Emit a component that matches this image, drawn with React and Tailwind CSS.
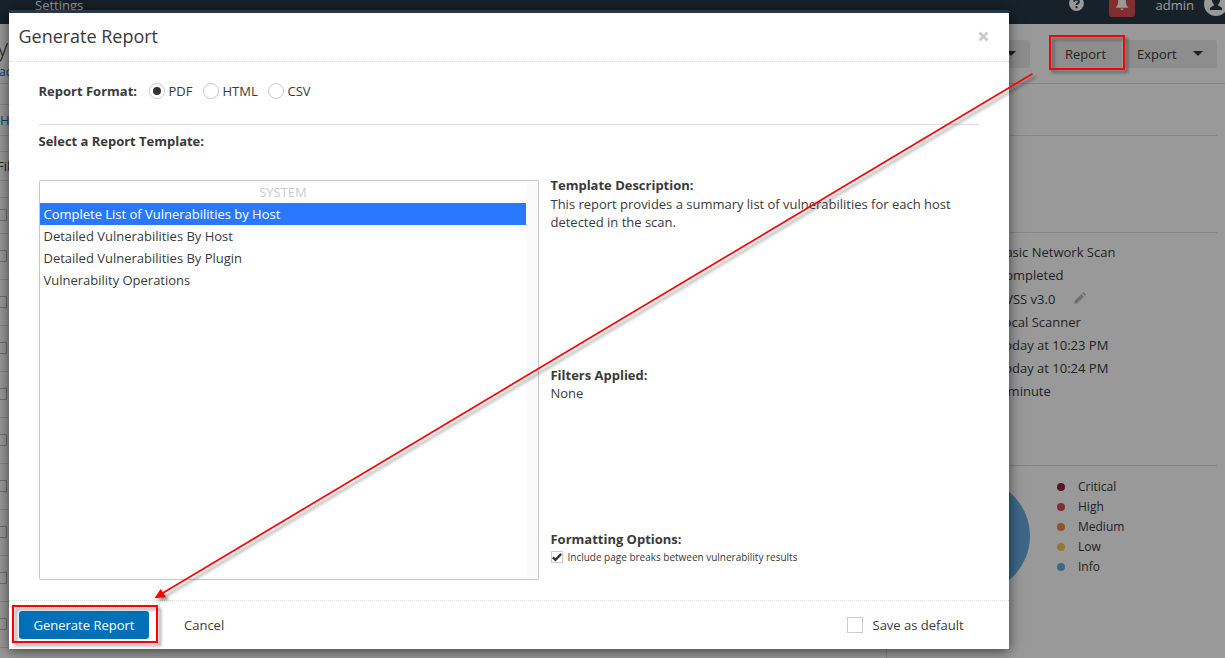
import React from "react";

const checkboxRows = Array.from({ length: 9 }, (_, i) => i);
const scanDetails = [
  ["Basic Network Scan", "h-[23px]"],
  ["Completed", "h-[23px]"],
  ["CVSS v3.0", "h-[25px]"],
  ["Local Scanner", "h-[22px]"],
  ["Today at 10:23 PM", "h-[23px]"],
  ["Today at 10:24 PM", "h-[23px]"],
  ["a minute", "h-[23px]"],
];
const severities = [
  ["Critical", "bg-[#91243e]"],
  ["High", "bg-[#dd4b50]"],
  ["Medium", "bg-[#f18c43]"],
  ["Low", "bg-[#f8c851]"],
  ["Info", "bg-[#67ace1]"],
];
const templates = [
  "Complete List of Vulnerabilities by Host",
  "Detailed Vulnerabilities By Host",
  "Detailed Vulnerabilities By Plugin",
  "Vulnerability Operations",
];

function Caret() {
  return (
    <svg width="10" height="5" viewBox="0 0 10 5" className="-mt-px shrink-0">
      <path d="M0 0h10L5 5z" fill="#333" />
    </svg>
  );
}

function TopBar() {
  return (
    <header className="flex h-6 shrink-0 items-start bg-[#263746] text-[13px] leading-[18px] text-white">
      <span className="-mt-1 ml-[35px]">Settings</span>
      <div className="ml-auto flex items-start">
        <svg width="16" height="16" viewBox="0 0 16 16" className="-mt-[5px] mr-[24.5px]">
          <circle cx="7.500" cy="8.500" r="7.400" fill="#fff" />
          <path d="M5.200 6.700a2.300 2.100 0 1 1 3.500 1.700c-.8.5-1.200.8-1.200 1.600" fill="none" stroke="#263746" strokeWidth="1.900" />
          <rect x="6.500" y="11.200" width="2" height="2" fill="#263746" />
        </svg>
        <div className="-mt-[9px] flex h-[26px] w-[26px] justify-center rounded-[3px] bg-[#dd4b50] pt-[5px]">
          <svg width="14" height="15" viewBox="0 0 14 15">
            <path d="M7 0C4 .5 3.200 3 3.200 5.500c0 3-1 4.500-2.700 6.200h13c-1.700-1.700-2.700-3.200-2.700-6.200C10.800 3 10 .5 7 0z" fill="#fff" />
            <path d="M5.500 12.500h3a1.500 1.500 0 0 1-3 0z" fill="#fff" />
          </svg>
        </div>
        <span className="-mt-1 ml-[20.5px] w-[48.5px]">admin</span>
        <svg width="21" height="24" viewBox="0 0 21 24" className="-mt-[8px]">
          <circle cx="12" cy="12" r="12" fill="#fff" />
          <path d="M12 3c-3.300 0-4.200 2.300-4.200 4.500 0 2.300 1 3.600 2 4.700v1.600c-2 .8-4 1.300-4 4.200h12.400c0-2.900-2-3.400-4-4.200v-1.600c1-1.100 2-2.400 2-4.700C16.200 5.300 15.300 3 12 3z" fill="#263746" />
        </svg>
      </div>
    </header>
  );
}

function ResultsPane() {
  return (
    <section className="flex w-[887px] shrink-0 flex-col border-r border-[#dcdcdc]">
      <div className="flex h-[21px] shrink-0 border-b border-[#dcdcdc]" />
      <div className="flex h-[31px] shrink-0 items-center border-b border-[#dcdcdc] pt-[2px] text-[#0071b9]">
        <span>Hosts</span>
      </div>
      <div className="h-4 shrink-0 border-b border-[#dcdcdc]" />
      <div className="flex h-[29px] shrink-0 items-center border-b border-[#dcdcdc] pt-[2px]">
        <span className="-ml-[3px]">Filter</span>
      </div>
      <div className="h-[17px] shrink-0 border-b border-[#dcdcdc]" />
      <div className="flex h-9 shrink-0 items-center border-b border-[#dcdcdc] pb-px">
        <span className="-ml-[5px] h-3 w-3 border border-[#bbb]" />
      </div>
      {checkboxRows.map((row) => (
        <div key={row} className="flex h-[46px] shrink-0 items-center border-b border-[#dcdcdc] pb-px">
          <span className="-ml-[5px] h-3 w-3 border border-[#bbb]" />
        </div>
      ))}
    </section>
  );
}

function DetailsPane() {
  return (
    <aside className="flex grow flex-col pr-2">
      <div className="h-[52px] shrink-0 border-b border-[#dcdcdc]" />
      <div className="h-[97px] shrink-0 border-b border-[#dcdcdc]" />
      <div className="flex h-[233px] shrink-0 flex-col border-b border-[#dcdcdc] pt-2 pl-[110px]">
        {scanDetails.map(([detail, height]) => (
          <div key={detail} className={"flex shrink-0 items-center " + height}>
            <span>{detail}</span>
            {detail.startsWith("CVSS") && (
              <svg width="12" height="12" viewBox="0 0 12 12" className="-mt-[3px] ml-[19px]">
                <path d="M0 12l.8-3.300L7.400 2.100l2.500 2.500-6.600 6.600zM8.200 1.300L9.500 0 12 2.500l-1.300 1.300z" fill="#bbb" />
              </svg>
            )}
          </div>
        ))}
      </div>
      <div className="flex pt-[11px]">
        <svg width="114" height="114" viewBox="0 0 114 114" className="mt-[2px] ml-[29px] shrink-0">
          <circle cx="57" cy="57" r="57" fill="#67ace1" />
        </svg>
        <ul className="ml-[27px] text-xs leading-5">
          {severities.map(([name, color]) => (
            <li key={name} className="flex h-5 items-center">
              <span className={"mr-[13px] h-2 w-2 rounded-full " + color} />
              {name}
            </li>
          ))}
        </ul>
      </div>
    </aside>
  );
}

function ScanPage() {
  return (
    <div className="flex h-[658px] w-[1225px] flex-col overflow-hidden bg-white">
      <TopBar />
      <div className="flex h-[60px] shrink-0 items-start justify-between border-b border-[#dcdcdc] pr-2">
        <div className="flex flex-col">
          <span className="mt-[9px] -ml-[3px] text-2xl leading-7 font-light">y</span>
          <span className="mt-[2px] -ml-[1px] text-xs leading-[18px] text-[#0071b9]">ac</span>
        </div>
        <div className="mt-4 flex h-7 leading-[18px]">
          <div className="mr-[22px] flex w-[110px] items-center justify-end rounded-[3px] bg-[#ececec] pr-[14px]">
            <Caret />
          </div>
          <div className="mr-[2px] flex w-[70px] items-center justify-center rounded-[3px] bg-[#ececec] pr-[3px]">Report</div>
          <div className="flex w-[93px] items-center justify-between rounded-[3px] bg-[#ececec] pr-[14px] pl-[13px]">
            Export
            <Caret />
          </div>
        </div>
      </div>
      <div className="flex grow">
        <ResultsPane />
        <DetailsPane />
      </div>
    </div>
  );
}

function Radio({ label, checked, className = "" }) {
  return (
    <span className={"flex items-center " + className}>
      <span className="mr-1 flex h-4 w-4 items-center justify-center rounded-full border border-[#ccc]">
        {checked && <span className="h-2 w-2 rounded-full bg-[#333]" />}
      </span>
      <span>{label}</span>
    </span>
  );
}

function ReportDialog() {
  return (
    <div className="mt-[10px] ml-[9px] flex h-[639px] w-[1000px] flex-col border-t-[3px] border-[#263746] bg-white shadow-[0_2px_12px_rgba(0,0,0,0.6)]">
      <div className="flex h-[49px] shrink-0 items-center justify-between border-b border-dotted border-[#ddd] pr-5 pl-[9.5px]">
        <h2 className="-mt-[2px] text-lg leading-6 tracking-[-0.02px]">Generate Report</h2>
        <svg width="11" height="11" viewBox="0 0 11 11" className="-mt-px">
          <path d="M1.500 1.500l8 8M9.500 1.500l-8 8" stroke="#ccc" strokeWidth="2.800" />
        </svg>
      </div>
      <div className="flex h-[538px] shrink-0 flex-col pr-[30px] pl-[30px]">
        <div className="flex h-[63px] shrink-0 items-center border-b border-[#ddd] pb-1 leading-[18px]">
          <b className="-ml-[0.5px] w-[110px] whitespace-nowrap">Report Format:</b>
          <Radio label="PDF" checked className="w-[54px]" />
          <Radio label="HTML" className="w-[65px]" />
          <Radio label="CSV" />
        </div>
        <b className="mt-[7px] mb-[30px] -ml-[0.5px] leading-[18px] tracking-[-0.02px]">Select a Report Template:</b>
        <div className="flex h-[400px] tracking-[-0.01px]">
          <div className="flex w-[500px] shrink-0 rounded-[2px] border border-[#c8c8c8]">
            <ul className="grow leading-[22px]">
              <li className="text-center text-[#ccc]">SYSTEM</li>
              {templates.map((name, i) => (
                <li key={name} className={i === 0 ? "bg-[#2879ff] pl-[3.5px] text-white" : "pl-[3.5px]"}>
                  {name}
                </li>
              ))}
            </ul>
            <div className="w-3 bg-[#fafafa]" />
          </div>
          <div className="flex flex-col pl-[11.5px] leading-[18px]">
            <div className="h-[190px]">
              <b className="-mt-1 block pb-[1px]">Template Description:</b>
              <p className="w-[410px]">This report provides a summary list of vulnerabilities for each host detected in the scan.</p>
            </div>
            <div className="h-[164px]">
              <b className="-mt-1 block">Filters Applied:</b>
              <p>None</p>
            </div>
            <b className="-mt-1 block">Formatting Options:</b>
            <div className="flex items-center text-[10px]">
              <span className="mr-[5px] flex h-3 w-3 items-center justify-center border border-[#ccc]">
                <svg width="10" height="9" viewBox="0 0 10 9" className="shrink-0">
                  <path d="M.8 4.300l2.700 2.500L9.200 .9" fill="none" stroke="#333" strokeWidth="2.400" />
                </svg>
              </span>
              Include page breaks between vulnerability results
            </div>
          </div>
        </div>
      </div>
      <div className="flex grow items-center border-t border-dotted border-[#ddd] pr-[45px] pl-[10px] leading-[18px]">
        <button className="h-7 w-[130px] rounded-[3px] bg-[#0071b9] text-white">Generate Report</button>
        <span className="ml-[35px]">Cancel</span>
        <span className="mr-[9.5px] ml-auto h-4 w-4 border border-[#ccc]" />
        <span className="w-[91.5px] whitespace-nowrap">Save as default</span>
      </div>
    </div>
  );
}

function Annotations() {
  return (
    <svg width="1225" height="658" viewBox="0 0 1225 658" className="absolute inset-0">
      <defs>
        <filter id="shade" filterUnits="userSpaceOnUse" x="0" y="0" width="1225" height="658" colorInterpolationFilters="sRGB">
          <feDropShadow dx="3" dy="3" stdDeviation="1.8" floodColor="#000" floodOpacity="0.4" />
        </filter>
      </defs>
      <g filter="url(#shade)" fill="none" stroke="#f00" strokeWidth="2">
        <rect x="1050" y="36" width="74" height="33" />
        <rect x="13" y="606" width="144" height="36" />
        <path d="M1032.500 73.700L162 593.500" strokeWidth="1.700" />
        <path d="M154.500 598.300l6.200-9.300 5.300 8.200z" fill="#f00" stroke="none" />
      </g>
    </svg>
  );
}

export default function App() {
  return (
    <div className="relative h-[658px] w-[1225px] overflow-hidden font-['Open_Sans',sans-serif] text-[13px] text-[#3a3a3a]">
      <ScanPage />
      <div className="absolute inset-0 bg-black/40">
        <ReportDialog />
      </div>
      <Annotations />
    </div>
  );
}
